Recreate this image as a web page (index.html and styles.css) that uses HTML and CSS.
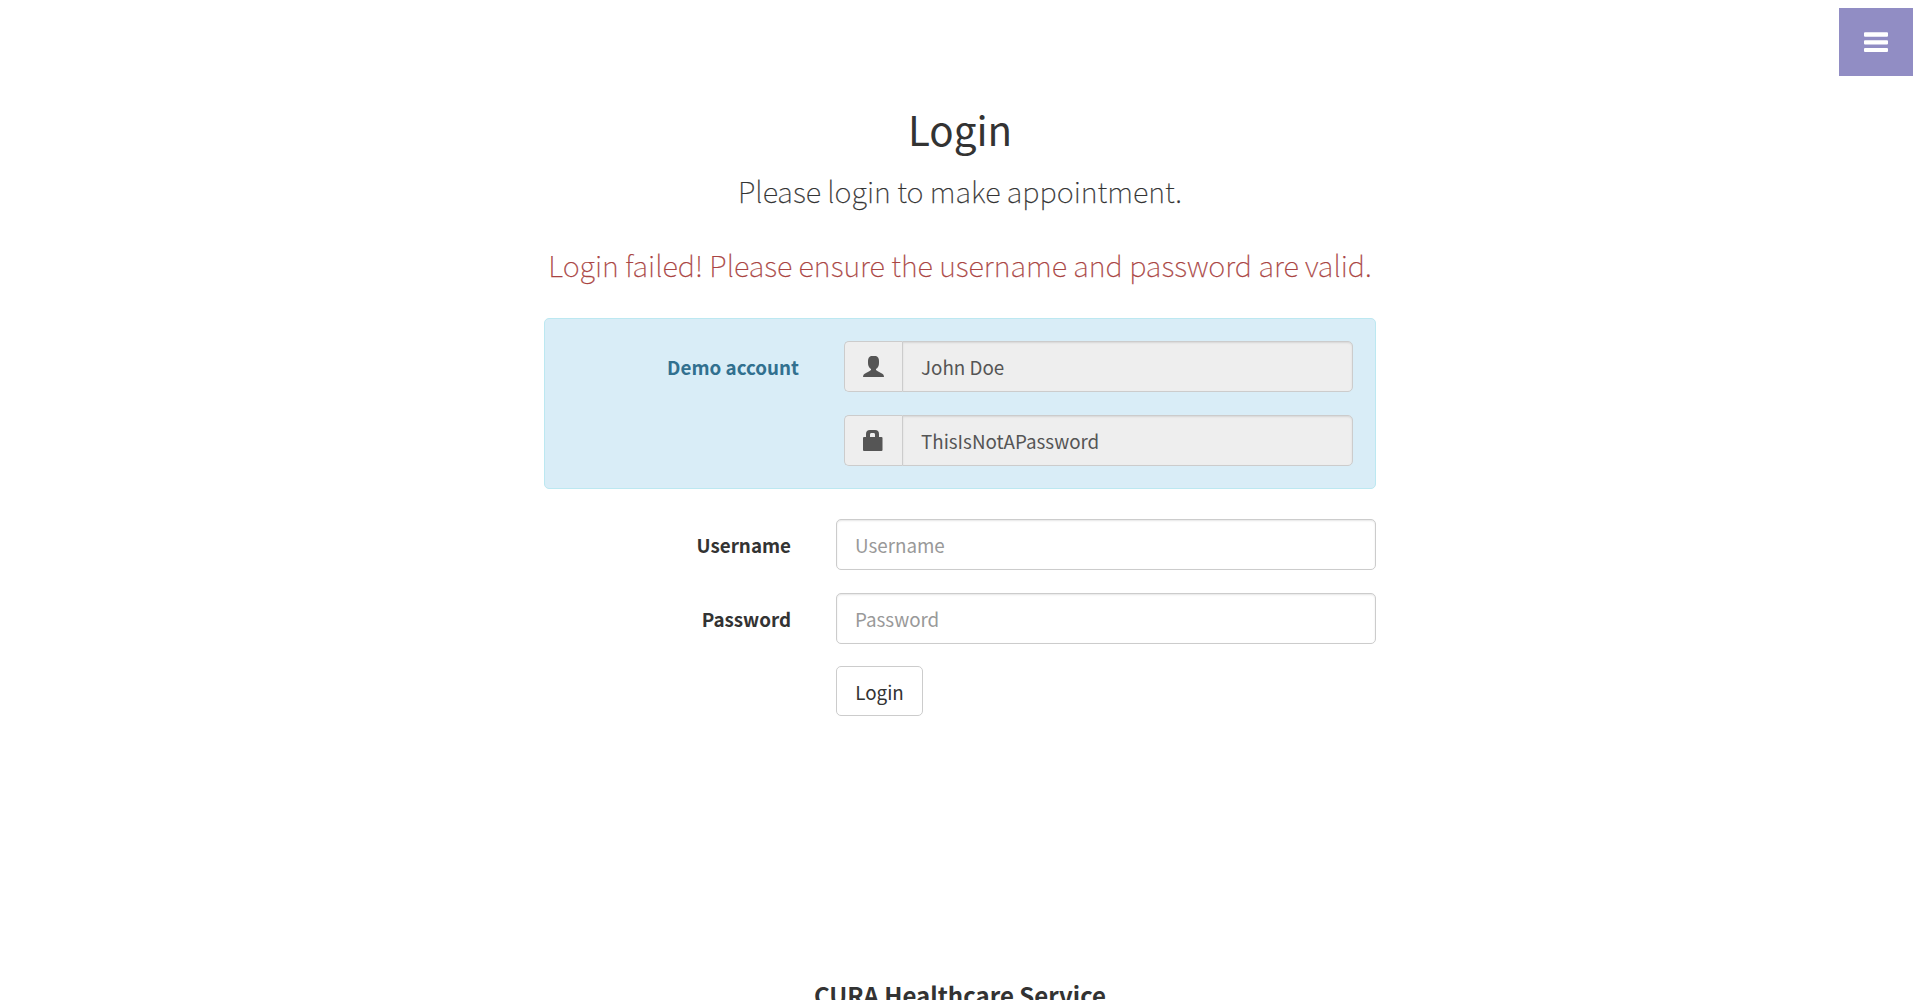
FILE: index.html
```html
<!DOCTYPE html>
<html lang="en">
<head>
<meta charset="utf-8">
<title>CURA Healthcare Service</title>
<link rel="stylesheet" href="styles.css">
</head>
<body>
<a class="menu-toggle" href="#" aria-label="Menu">
  <svg width="24" height="20" viewBox="0 0 24 20"><path fill="#fff" d="M1 .3h22q1 0 1 1v2.400q0 1-1 1H1q-1 0-1-1V1.300q0-1 1-1zM1 8.200h22q1 0 1 1v2.400q0 1-1 1H1q-1 0-1-1V9.200q0-1 1-1zM1 16h22q1 0 1 1v2q0 1-1 1H1q-1 0-1-1v-2q0-1 1-1z"/></svg>
</a>
<main class="login">
  <header class="intro">
    <h2 class="title">Login</h2>
    <p class="lead">Please login to make appointment.</p>
    <p class="lead error">Login failed! Please ensure the username and password are valid.</p>
  </header>
  <form class="form">
    <section class="demo">
      <div class="row">
        <label class="label">Demo account</label>
        <div class="group">
          <span class="addon"><svg width="21" height="21" viewBox="0 0 21 21"><path fill="#555" d="M8 0h5q3 1 3 5v2q0 4-3 6v1q1 1 5 3 3 1 3 4H0q0-3 3-4 4-2 5-3v-1Q5 11 5 7V5q0-4 3-5z"/></svg></span>
          <input class="control" type="text" value="John Doe" readonly>
        </div>
      </div>
      <div class="row">
        <span class="label"></span>
        <div class="group">
          <span class="addon"><svg class="lock" width="20" height="21" viewBox="0 0 20 21"><path fill="#555" fill-rule="evenodd" d="M3 7V4q0-4 4-4h5q4 0 4 4v3h2.500q1 0 1 1v12q0 1-1 1H1q-1 0-1-1V8q0-1 1-1zM7 7h5V4.500q0-1.500-1-1.500H8Q7 3 7 4.500z"/></svg></span>
          <input class="control" type="text" value="ThisIsNotAPassword" readonly>
        </div>
      </div>
    </section>
    <div class="row">
      <label class="label" for="username">Username</label>
      <input class="control" id="username" type="text" placeholder="Username">
    </div>
    <div class="row">
      <label class="label" for="password">Password</label>
      <input class="control" id="password" type="password" placeholder="Password">
    </div>
    <button class="submit" type="button">Login</button>
  </form>
</main>
<footer class="footer"><strong>CURA Healthcare Service</strong></footer>
</body>
</html>
```
FILE: styles.css
```css
* { box-sizing: border-box; }
html, body { height: 100%; }
body {
  margin: 0;
  overflow: hidden;
  background: #fff;
  color: #333;
  font: 18.8px/30px "Noto Sans CJK SC", "Noto Sans", sans-serif;
}
.menu-toggle {
  position: absolute;
  top: 8px;
  right: 7px;
  width: 74px;
  height: 68px;
  display: flex;
  align-items: center;
  justify-content: center;
  background: #918dc4;
}
.login { width: 832px; margin: 0 auto; padding-top: 104px; }
.intro { text-align: center; white-space: nowrap; }
.title { margin: 0; font-size: 40.300px; font-weight: 400; line-height: 50px; }
.lead { margin: 14px 0 0; font-size: 28.950px; font-weight: 100; line-height: 45px; -webkit-text-stroke: .25px currentColor; }
.lead.error { margin-top: 29px; color: #a94442; }
.form { margin-top: 31px; }
.demo {
  height: 171px;
  margin-bottom: 30px;
  padding: 22px 22px 0 0;
  border: 1px solid #bce8f1;
  border-radius: 5px;
  background: #d9edf7;
  color: #31708f;
}
.row { display: flex; height: 51px; margin-bottom: 23px; }
.label {
  width: 292px;
  padding-right: 45px;
  font-weight: 700;
  line-height: 51px;
  text-align: right;
}
.demo .label { width: 299px; }
.group { display: flex; flex: 1; }
.addon {
  width: 58px;
  display: flex;
  align-items: center;
  padding-left: 18px;
  border: 1px solid #ccc;
  border-right: 0;
  border-radius: 5px 0 0 5px;
  background: #eee;
}
.control {
  flex: 1;
  min-width: 0;
  height: 51px;
  padding: 0 18px;
  border: 1px solid #ccc;
  border-radius: 5px;
  background: #fff;
  box-shadow: inset 0 1px 2px rgba(0, 0, 0, .1);
  color: #555;
  font: inherit;
}
.control::placeholder { color: #999; opacity: 1; }
.group .control { border-radius: 0 5px 5px 0; background: #eee; }
.submit {
  display: block;
  width: 87px;
  height: 50px;
  margin: -1px 0 0 292px;
  padding: 1px 0 0;
  border: 1px solid #ccc;
  border-radius: 5px;
  background: #fff;
  color: #333;
  font: inherit;
}
.footer { margin-top: 261px; font-size: 24px; line-height: 36px; text-align: center; }
```
